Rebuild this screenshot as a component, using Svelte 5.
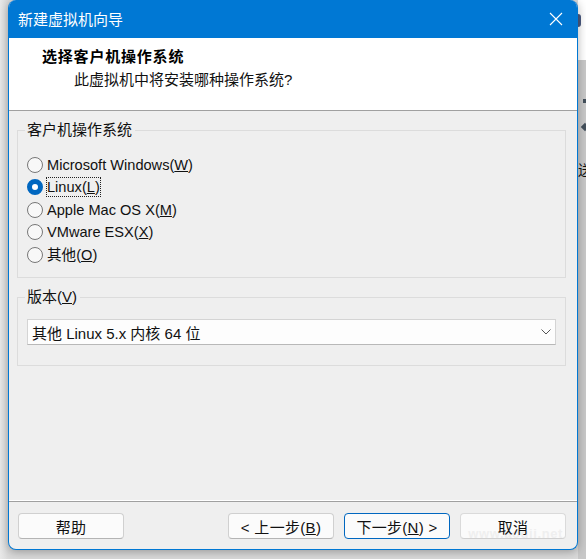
<script>
  let options = [
    { label: 'Microsoft Windows(', key: 'W', checked: false, focus: false },
    { label: 'Linux(', key: 'L', checked: true, focus: true },
    { label: 'Apple Mac OS X(', key: 'M', checked: false, focus: false },
    { label: 'VMware ESX(', key: 'X', checked: false, focus: false },
    { label: '其他(', key: 'O', checked: false, focus: false }
  ];
</script>

<div class="desktop">
  <div class="backdrop">
    <span class="stray ring"></span>
    <span class="stray dot"></span>
    <span class="stray diamond"></span>
    <span class="stray glyph">送</span>
  </div>

  <div class="window">
    <header class="titlebar">
      <span class="title">新建虚拟机向导</span>
      <svg class="close" width="14" height="14" viewBox="0 0 14 14">
        <path d="M1 1 L13 13 M13 1 L1 13" stroke="#fff" stroke-width="1.1" fill="none" />
      </svg>
    </header>

    <div class="banner">
      <h1>选择客户机操作系统</h1>
      <p>此虚拟机中将安装哪种操作系统?</p>
    </div>

    <main class="body">
      <fieldset class="group os">
        <legend>客户机操作系统</legend>
        <div class="options">
          {#each options as opt}
            <div class="option">
              <span class="radio" class:checked={opt.checked}></span>
              <span class="label" class:focus={opt.focus}>{opt.label}<u>{opt.key}</u>)</span>
            </div>
          {/each}
        </div>
      </fieldset>

      <fieldset class="group version">
        <legend>版本(<u>V</u>)</legend>
        <div class="select">
          <span>其他 Linux 5.x 内核 64 位</span>
          <svg width="10" height="6" viewBox="0 0 10 6">
            <path d="M0.5 0.5 L5 5 L9.5 0.5" stroke="#555" stroke-width="1" fill="none" />
          </svg>
        </div>
      </fieldset>
    </main>

    <footer class="footer">
      <button class="btn">帮助</button>
      <div class="nav">
        <button class="btn">&lt; 上一步(<u>B</u>)</button>
        <button class="btn primary">下一步(<u>N</u>) &gt;</button>
        <button class="btn cancel">
          <span class="watermark">www.aoqii.net</span>
          <span class="caption">取消</span>
        </button>
      </div>
    </footer>
  </div>
</div>

<style>
  :global(body) {
    margin: 0;
    background: #fff;
  }
  .desktop {
    position: relative;
    width: 586px;
    height: 559px;
    overflow: hidden;
    padding: 0 8px 9px 8px;
    box-sizing: border-box;
    background: linear-gradient(90deg, #e8e8e8 0, #dadada 8px, #dadada 578px, #c8c8c8 578px);
    font-family: "Liberation Sans", "Noto Sans CJK SC", sans-serif;
    font-size: 14.6px;
    color: #111;
  }
  .backdrop {
    position: absolute;
    top: 0;
    right: 0;
    width: 8px;
    height: 60px;
    background: #fff;
  }
  .stray {
    position: absolute;
  }
  .ring {
    top: 14px;
    left: 0;
    width: 3px;
    height: 13px;
    border-radius: 0 6px 6px 0;
    background: #4a5a80;
  }
  .dot {
    top: 99px;
    left: 5px;
    width: 3px;
    height: 4px;
    background: #44505c;
  }
  .diamond {
    top: 124px;
    left: 4px;
    width: 6px;
    height: 6px;
    background: #44505c;
    transform: rotate(45deg);
  }
  .glyph {
    top: 162px;
    left: 0;
    font-size: 14px;
    line-height: 16px;
  }
  .window {
    position: relative;
    height: 100%;
    display: flex;
    flex-direction: column;
    box-sizing: border-box;
    background: #efefef;
    border: 1px solid #0078d4;
    border-top: 0;
    border-radius: 8px;
    box-shadow: 0 2px 10px rgba(0, 0, 0, 0.3);
    overflow: hidden;
  }
  .titlebar {
    height: 38px;
    flex: none;
    box-sizing: border-box;
    display: flex;
    align-items: center;
    justify-content: space-between;
    padding: 0 7px 2px 9px;
    background: #0078d4;
    color: #fff;
  }
  .title {
    font-size: 15px;
  }
  .close {
    margin: 2px 7px 0 0;
  }
  .banner {
    height: 73px;
    flex: none;
    box-sizing: border-box;
    padding-top: 10px;
    background: #fff;
    border-bottom: 1px solid #a0a0a0;
  }
  .banner h1 {
    margin: 0 0 0 33px;
    font-size: 15px;
    line-height: 17px;
    letter-spacing: 0.8px;
    font-weight: bold;
    color: #000;
  }
  .banner p {
    margin: 6px 0 0 65px;
    font-size: 15px;
    line-height: 17px;
  }
  .body {
    flex: 1;
    display: flex;
    flex-direction: column;
    gap: 10px;
    padding: 10px 11px 0 8px;
    border-bottom: 1px solid #a0a0a0;
    box-shadow: inset 0 -1px 0 #fff;
  }
  .group {
    margin: 0;
    border: 1px solid #dcdcdc;
    min-width: 0;
  }
  .group legend {
    margin-left: -2px;
    padding: 0 3px 2px 2px;
    font-size: 15px;
    line-height: 17px;
  }
  .os {
    height: 157px;
    box-sizing: border-box;
    padding: 16px 0 0 9px;
  }
  .options {
    display: flex;
    flex-direction: column;
    gap: 5px;
  }
  .option {
    display: flex;
    align-items: center;
    gap: 3px;
    height: 17.5px;
  }
  .radio {
    width: 16px;
    height: 16px;
    box-sizing: border-box;
    border: 1px solid #777;
    border-radius: 50%;
    background: #f8f8f8;
  }
  .radio.checked {
    border: 5px solid #0067c0;
    background: #fff;
  }
  .label {
    border: 1px dotted transparent;
    line-height: 18px;
  }
  .label.focus {
    border-color: #222;
  }
  .version {
    height: 78px;
    box-sizing: border-box;
    padding: 12px 9px 0 9px;
  }
  .select {
    height: 26px;
    display: flex;
    align-items: center;
    justify-content: space-between;
    box-sizing: border-box;
    padding: 0 4px 0 4px;
    font-size: 15px;
    background: #fdfdfd;
    border: 1px solid #d4d4d4;
    border-bottom-color: #b8b8b8;
  }
  .footer {
    height: 47px;
    flex: none;
    display: flex;
    justify-content: space-between;
    padding: 11px 11px 0 9px;
    box-sizing: border-box;
  }
  .nav {
    display: flex;
    gap: 10px;
  }
  .btn {
    width: 106px;
    height: 26px;
    padding: 0;
    font: inherit;
    font-size: 15px;
    letter-spacing: 0.3px;
    color: #111;
    background: #fbfbfb;
    border: 1px solid #d0d0d0;
    border-bottom-color: #b4b4b4;
    border-radius: 4px;
  }
  .btn.primary {
    border: 1px solid #0067c0;
  }
  .btn.cancel {
    position: relative;
    overflow: hidden;
    border-color: #dadada;
    border-bottom-color: #d0d0d0;
  }
  .caption {
    position: relative;
  }
  .watermark {
    position: absolute;
    right: 2px;
    bottom: -3px;
    font-size: 13px;
    font-weight: bold;
    letter-spacing: 0.6px;
    color: #efefef;
  }
</style>
